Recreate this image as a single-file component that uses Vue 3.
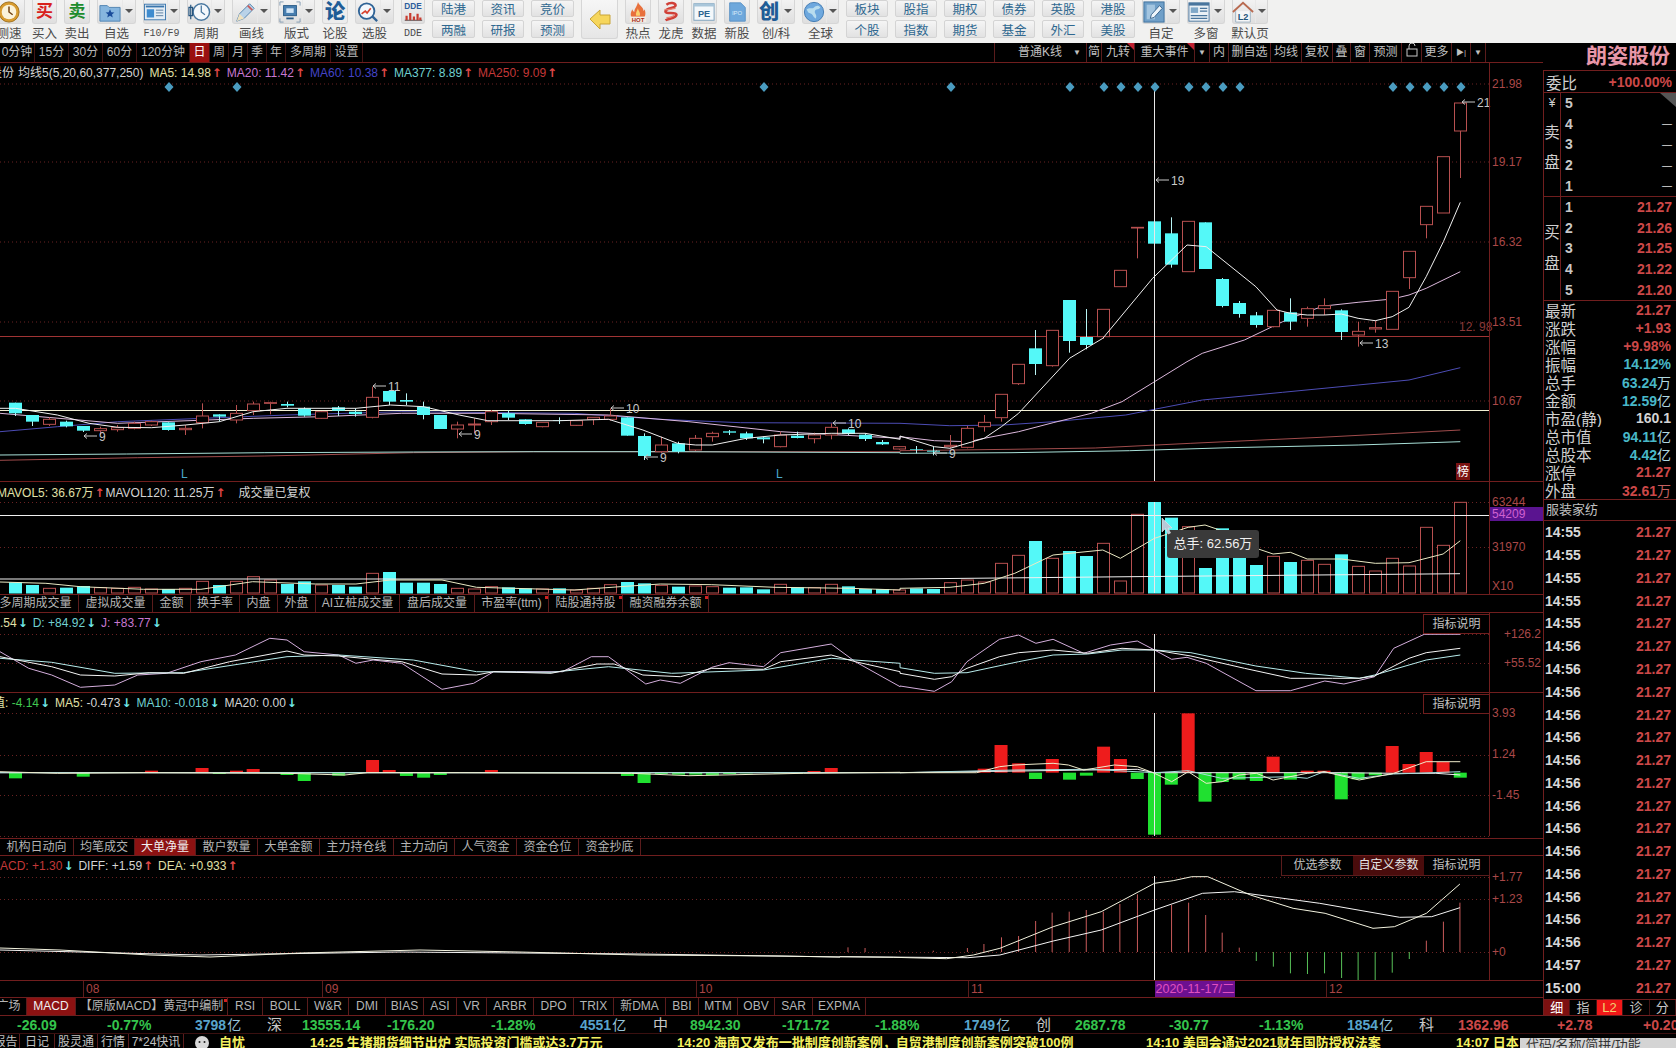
<script setup>
const txt = (s, size, color, y = 20, x = 12, weight = 900) =>
  `<text x="${x}" y="${y}" font-size="${size}" font-weight="${weight}" fill="${color}" text-anchor="middle" font-family="Liberation Sans,Noto Sans CJK SC,sans-serif">${s}</text>`

const icons = {
  clock: '<circle cx="12" cy="12" r="11" fill="#d89c30" stroke="#9c6c18"/><circle cx="12" cy="12" r="8" fill="#fbf3da"/><path d="M12 6v6l4 3" fill="none" stroke="#70400f" stroke-width="1.6"/>',
  star: '<path d="M1 5h8l2 2h12v15H1z" fill="#86b6df" stroke="#4f82b0"/><path d="M12 9l1.4 3.2 3.4.3-2.6 2.2.8 3.3-3-1.8-3 1.8.8-3.3-2.6-2.2 3.4-.3z" fill="#1a4c9a"/>',
  doc: '<rect x="0.5" y="3.5" width="23" height="17" fill="#e4edf5" stroke="#3a76ad"/><rect x="2" y="5" width="20" height="2" fill="#3a76ad"/><rect x="3" y="9" width="8" height="9" fill="#3f8ccf"/><path d="M13 10h8M13 13h8M13 16h8" stroke="#567a9c"/>',
  period: '<circle cx="14.5" cy="12" r="9" fill="#f4f8fc" stroke="#48779f" stroke-width="1.6"/><path d="M14.5 5v7l4 3" fill="none" stroke="#48779f" stroke-width="1.4"/><path d="M3 4v16M1 7h4v9H1z" fill="none" stroke="#25557f" stroke-width="1.3"/>',
  pencil: '<path d="M3 22l3-8L17 3l5 5L11 19z" fill="#b9d2e8" stroke="#4f80ac"/><path d="M15 5l5 5" stroke="#c85a5a" stroke-width="2"/><path d="M3 22l3-8 5 5z" fill="#f0e2c0"/>',
  layout: '<path d="M1 5V1h4M19 1h4v4M23 19v4h-4M5 23H1v-4" fill="none" stroke="#8099b2"/><rect x="5" y="5" width="14" height="11" fill="#477eb0" stroke="#285a86"/><rect x="8" y="8" width="8" height="5" fill="#cfe4f6"/><path d="M8 19h8" stroke="#285a86" stroke-width="2"/>',
  lun: txt('论', 22, '#1e5c96', 20),
  search: '<circle cx="10.5" cy="11" r="8.5" fill="#f3f8fd" stroke="#2f6396" stroke-width="2"/><path d="M5 14l4-3 2 2 4-5" fill="none" stroke="#d8402c" stroke-width="1.8"/><path d="M17 17l5 5" stroke="#2f6396" stroke-width="2.5"/>',
  dde: txt('DDE', 9, '#2c5c9c', 9) + '<path d="M3 21h19" stroke="#444"/><path d="M5 21v-5M9 21v-8M13 21v-4M17 21v-7M20 21v-3" stroke="#c83c30" stroke-width="2.4"/>',
  arrow: '<path d="M2 12L12 3v5h10v9H12v5z" fill="#f6d65c" stroke="#c8a438"/>',
  hot: '<path d="M12 1c1 4 6 5 6 10 1-1 1-2 1-2 2 4 1 8-1 10H6C3 16 4 12 6 9c0 2 1 2 2 3 0-4 3-6 4-11z" fill="#e8703c"/><path d="M12 8c0 3 3 4 2 8h-4c-1-3 1-5 2-8z" fill="#fbd06c"/><rect x="3" y="17" width="18" height="6" fill="#f4ece2"/>' + txt('HOT', 6.5, '#a82c20', 22.5),
  dragon: '<path d="M7 4c4-3 10-2 10 1s-10 2-11 6 12 0 12 4-9 4-12 6" fill="none" stroke="#d04038" stroke-width="2.8"/><path d="M5 9c3 2 8-1 12-1M7 18c3 0 7-1 9-3" fill="none" stroke="#e88070" stroke-width="1.2"/>',
  pe: '<rect x="1" y="3" width="22" height="18" fill="#f4f8fb" stroke="#7aa0bc"/><rect x="1" y="3" width="22" height="3" fill="#a9c6da"/>' + txt('PE', 10, '#2d6590', 17),
  ipo: '<path d="M4 2h12l5 5v15H4z" fill="#6ea8dc" stroke="#5a92c4"/>' + txt('IPO', 6.5, '#d9ecfa', 15, 12, 400),
  chuang: txt('创', 22, '#1e5c96', 20),
  globe: '<circle cx="12" cy="12" r="10.5" fill="#6ea8de" stroke="#3e78b0"/><path d="M4 9c4-2 6 0 8-2s5-3 7 0c-2 3-5 1-6 4s3 4 1 8c-3-1-3-4-5-5s-3 0-5-5z" fill="#b8dcee"/>',
  edit: '<rect x="1" y="1" width="22" height="22" fill="#6f9fc8" stroke="#3c6f9b"/><rect x="4" y="4" width="9" height="16" fill="#a3c5e0"/><path d="M8 19l1-4 9-10 3 3-9 10z" fill="#eef5fb" stroke="#335f88"/>',
  grid: '<rect x="1" y="2" width="22" height="20" fill="#eaf0f5" stroke="#49759d"/><rect x="1" y="2" width="22" height="3" fill="#49759d"/><rect x="3" y="7" width="8" height="6" fill="#7fa8c8"/><path d="M13 8h8M13 11h8M3 16h18M3 19h18" stroke="#49759d" stroke-width="1.4"/>',
  home: '<path d="M1 12L12 2l11 10" fill="none" stroke="#b86a50" stroke-width="2"/><path d="M4 11v12h16V11" fill="#f5f6f7" stroke="#9bb0c0"/>' + txt('L2', 10, '#24567c', 21)
}

const tools = [
  { w: 32, ml: -7, icon: 'clock', label: '测速' },
  { w: 25, icon: '', glyph: '买', gc: 'buy', label: '买入' },
  { w: 26, icon: '', glyph: '卖', gc: 'sell', label: '卖出' },
  { w: 39, icon: 'star', dd: 1, label: '自选' },
  { w: 37, icon: 'doc', dd: 1, label: 'F10/F9', mono: 1 },
  { w: 38, icon: 'period', dd: 1, label: '周期' },
  { w: 39, icon: 'pencil', dd: 1, label: '画线' },
  { w: 37, icon: 'layout', dd: 1, label: '版式' },
  { w: 26, icon: 'lun', label: '论股', flat: 1 },
  { w: 39, icon: 'search', dd: 1, label: '选股' },
  { w: 24, icon: 'dde', label: 'DDE', mono: 1 },
  { w: 43, pair: ['陆港', '两融'] },
  { w: 42, pair: ['资讯', '研报'] },
  { w: 43, pair: ['竞价', '预测'] },
  { w: 37, icon: 'arrow', big: 1, label: '' },
  { w: 26, icon: 'hot', label: '热点' },
  { w: 26, icon: 'dragon', label: '龙虎' },
  { w: 26, icon: 'pe', label: '数据' },
  { w: 26, icon: 'ipo', label: '新股' },
  { w: 38, icon: 'chuang', dd: 1, label: '创/科' },
  { w: 37, icon: 'globe', dd: 1, label: '全球' },
  { w: 42, pair: ['板块', '个股'] },
  { w: 42, pair: ['股指', '指数'] },
  { w: 42, pair: ['期权', '期货'] },
  { w: 42, pair: ['债券', '基金'] },
  { w: 42, pair: ['英股', '外汇'] },
  { w: 44, pair: ['港股', '美股'] },
  { w: 38, icon: 'edit', dd: 1, label: '自定' },
  { w: 38, icon: 'grid', dd: 1, label: '多窗' },
  { w: 36, icon: 'home', dd: 1, label: '默认页' }
]

const periodsL = [['0分钟', 35], ['15分', 34], ['30分', 34], ['60分', 34], ['120分钟', 53], ['日', 20], ['周', 19], ['月', 19], ['季', 19], ['年', 19], ['多周期', 45], ['设置', 32]]
const periodsR = [
  { t: '普通K线', w: 92, cls: 'pk' }, { t: '简', w: 15 }, { t: '九转', w: 33, hot: 1 }, { t: '重大事件', w: 60, hot: 1 },
  { t: '▼', w: 15, small: 1 }, { t: '内', w: 19 }, { t: '删自选', w: 42 }, { t: '均线', w: 31 }, { t: '复权', w: 31 },
  { t: '叠', w: 18 }, { t: '窗', w: 19 }, { t: '预测', w: 32 }, { t: '', w: 20, lock: 1 }, { t: '更多', w: 30 },
  { t: '▶|', w: 19, small: 1 }, { t: '▼', w: 15, small: 1 }
]

const volTabs = [['多周期成交量', 86], ['虚拟成交量', 74], ['金额', 38], ['换手率', 49], ['内盘', 38], ['外盘', 38], ['AI立桩成交量', 84], ['盘后成交量', 75], ['市盈率(ttm)', 74], ['陆股通持股', 74], ['融资融券余额', 86]]
const volDots = ['市盈率(ttm)', '陆股通持股', '融资融券余额']
const flowTabs = [['机构日动向', 74], ['均笔成交', 61], ['大单净量', 61], ['散户数量', 62], ['大单金额', 62], ['主力持仓线', 74], ['主力动向', 61], ['人气资金', 62], ['资金仓位', 62], ['资金抄底', 62]]
const macdTabs = [['广场', 36], ['MACD', 49], ['【原版MACD】黄冠中编制', 152], ['RSI', 35], ['BOLL', 45], ['W&R', 41], ['DMI', 37], ['BIAS', 38], ['ASI', 33], ['VR', 30], ['ARBR', 47], ['DPO', 40], ['TRIX', 40], ['新DMA', 52], ['BBI', 33], ['MTM', 39], ['OBV', 37], ['SAR', 38], ['EXPMA', 53]]

// ---- chart data: candles are spaced 17px, ending at x = 1460 ----
const X = i => 15 + 17 * i
const L = v => 380 + v / 3
const R = v => 190 + v / 3
// [wickTop, top, bottom, wickBottom, cyan?]
const leftC = [
  [68,68,100,108,1],[105,105,125,138,1],[112,118,133,138,0],[122,125,139,142,1],[138,138,152,156,1],[140,146,152,165,0],[135,143,149,155,0],
  [125,130,145,148,0],[122,125,135,138,0],[127,127,150,152,1],[135,145,149,165,0],[70,108,128,145,0],[103,103,110,125,1],[75,100,120,130,0],
  [65,72,92,105,0],[65,68,70,103,0],[65,72,77,82,1],[82,85,107,110,1],[93,95,115,117,0],[78,82,92,108,1],[85,95,102,110,1],[20,52,112,115,0],
  [33,33,65,75,1],[40,60,65,75,1],[65,80,105,118,1],[105,105,147,147,1],[125,135,147,175,0],[115,132,135,160,0],[90,95,125,135,0],
  [90,100,113,120,1],[118,118,132,134,1],[127,127,140,142,0],[112,121,123,132,1],[120,122,136,138,0],[112,112,118,135,0],[85,108,118,122,0],
  [112,112,167,167,1],[160,168,228,240,1],[170,195,215,220,0],[185,190,215,220,1],[165,175,210,213,0],[155,160,170,185,0],[150,154,158,165,1],
  [155,160,175,180,1],[170,172,178,190,1],[155,165,200,202,0],[155,167,174,175,1],[158,165,176,190,0],[130,142,165,178,0],[145,148,162,165,1],
  [160,164,177,183,1],[180,186,193,195,1],[198,200,207,209,0]
].map(c => [L(c[0]), L(c[1]), L(c[2]), L(c[3]), c[4]])
const rightC = [
  [768,777,779,790,1],[770,782,785,796,1],[735,766,770,775,0],[708,715,772,775,0],[675,697,710,725,0],[613,613,683,695,0],[523,523,581,585,0],
  [420,475,522,555,1],[421,421,527,530,0],[330,330,453,488,1],[357,441,465,478,1],[358,358,440,447,0],[241,241,290,290,0],[112,112,114,205,0],
  [94,94,161,161,1],[82,130,224,233,1],[94,94,245,245,0],[97,97,237,237,1],[264,267,348,352,1],[333,339,372,383,1],[366,376,405,413,1],
  [361,361,410,412,0],[325,367,395,420,1],[350,356,385,410,0],[325,347,356,375,0],[358,361,426,450,1],[395,424,435,470,0],[392,413,417,428,0],
  [304,304,418,418,0],[184,184,263,297,0],[49,49,104,145,0],[-100,-100,69,69,0],[-261,-261,-177,-36,0]
].map(c => [R(c[0]), R(c[1]), R(c[2]), R(c[3]), c[4]])
const candles = [...leftC, ...rightC].map((c, i) => ({ x: X(i), wt: c[0], t: c[1], b: c[2], wb: c[3], up: !c[4] }))

const volL = [607,615,625,623,618,623,625,622,627,627,625,604,615,604,590,600,612,604,615,615,620,580,576,608,608,612,625,627,620,622,625,627,625,630,625,614,606,610,616,620,618,620,623,622,628,613,622,623,613,619,627,627,630].map(L)
const volR = [325,327,308,300,306,250,226,183,235,213,228,190,303,103,66,113,140,264,145,190,255,229,246,241,253,223,259,273,235,258,142,196,67].map(v => 480 + v / 3)
const volBars = [...volL, ...volR].map((t, i) => ({ x: X(i), t, up: candles[i].up }))

const ptsOf = (arr, fx, fy) => arr.map(([a, b]) => `${fx(a).toFixed(1)},${fy(b).toFixed(1)}`).join(' ')
const z6x = v => v / 1.742
const z4x = v => 900 + v / 2.613
const join = (a, b, fb) => ptsOf(a, z6x, L) + ' ' + ptsOf(b, z4x, fb)

const ma5 = join(
  [[0,85],[27,85],[100,105],[155,130],[205,142],[264,143],[323,135],[382,125],[441,95],[500,85],[620,85],[680,75],[738,80],[800,105],[850,122],[975,122],[1060,118],[1120,150],[1180,190],[1212,195],[1241,195],[1300,175],[1360,165],[1448,160],[1507,160],[1568,178]],
  [[0,738],[90,770],[131,775],[220,745],[265,710],[310,670],[443,505],[530,445],[660,265],[750,165],[800,170],[930,290],[985,360],[1020,370],[1064,375],[1108,375],[1153,372],[1197,385],[1242,392],[1286,380],[1330,352],[1375,260],[1420,155],[1464,37]], R)
const ma20 = join(
  [[0,100],[205,130],[441,115],[560,110],[700,100],[850,100],[1060,105],[1200,125],[1360,155],[1568,175]],
  [[0,740],[90,752],[180,755],[220,745],[310,725],[400,698],[500,670],[580,635],[665,575],[750,515],[790,490],[900,450],[1000,395],[1064,365],[1108,348],[1197,337],[1286,327],[1330,315],[1375,295],[1464,245]], R)
const ma60 = join(
  [[0,155],[100,140],[205,125],[500,105],[700,95],[1000,100],[1150,118],[1290,128],[1568,130]],
  [[0,700],[130,707],[270,705],[400,695],[590,675],[665,658],[790,630],[1000,607],[1197,585],[1330,570],[1464,533]], R)
const ma377 = join([[0,225],[220,222],[460,218],[720,216],[930,215],[1180,215],[1568,218]], [[0,790],[290,788],[600,782],[860,773],[1197,765],[1464,755]], R)
const ma250 = join([[0,241],[240,233],[460,228],[720,218],[930,215],[1568,215]], [[0,782],[290,778],[510,774],[760,760],[1100,742],[1464,720]], R)

const diamonds = [169,237,764,951,1070,1104,1121,1138,1155,1189,1206,1223,1240,1393,1410,1427,1444,1461]
const markers = [
  { x: 1461, y: 102, t: '21' }, { x: 1155, y: 180, t: '19' }, { x: 1359, y: 343, t: '13' }, { x: 83, y: 436, t: '9' }, { x: 458, y: 434, t: '9' },
  { x: 644, y: 457, t: '9' }, { x: 933, y: 453, t: '9' }, { x: 372, y: 386, t: '11' }, { x: 610, y: 408, t: '10' }, { x: 832, y: 423, t: '10' }
]
const mainAxis = [['21.98',84],['19.17',162],['16.32',242],['13.51',322],['10.67',401]]

const volMa5 = ptsOf([[0,606],[80,610],[140,620],[250,628],[350,628],[440,605],[550,612],[620,612],[680,600],[770,600],[830,622],[1000,630],[1080,620],[1150,612],[1240,614],[1350,622],[1480,625],[1568,630]], z6x, L) + ' ' +
  ptsOf([[0,325],[131,322],[220,310],[300,280],[400,225],[530,210],[576,235],[665,175],[753,142],[797,135],[886,170],[931,205],[975,222],[1020,217],[1064,237],[1153,237],[1242,250],[1330,248],[1419,222],[1464,182]], z4x, v => 480 + v / 3)

const z9y = v => 610 + v / 3
const z5y = v => 480 + v / 3
const join95 = (a, b) => ptsOf(a, z6x, z9y) + ' ' + ptsOf(b, z4x, z5y)
const kdjJ = join95(
  [[0,125],[50,175],[90,195],[140,232],[200,225],[240,195],[290,190],[350,155],[410,135],[470,85],[500,90],[530,125],[590,135],[620,160],[650,150],[700,160],[770,238],[825,220],[860,185],[900,185],[980,185],[1030,140],[1060,140],[1125,222],[1150,210],[1185,220],[1240,172],[1270,158],[1330,170],[1360,128],[1448,102],[1490,155],[1568,230]],
  [[0,618],[90,634],[135,605],[175,545],[260,478],[310,465],[355,490],[400,478],[480,520],[550,495],[620,483],[665,510],[710,538],[750,532],[800,550],[930,632],[1020,632],[1110,603],[1160,612],[1240,590],[1290,505],[1370,463],[1464,463]])
const kdjK = join95(
  [[0,140],[30,150],[90,170],[140,195],[200,198],[260,188],[320,190],[400,155],[500,123],[530,135],[590,138],[650,148],[700,155],[770,192],[830,195],[860,185],[960,190],[1040,162],[1070,162],[1120,195],[1185,200],[1240,175],[1330,178],[1360,155],[1448,135],[1490,155],[1568,185]],
  [[0,580],[90,598],[135,590],[175,565],[260,530],[310,518],[400,510],[490,520],[580,505],[665,510],[760,528],[900,565],[1020,595],[1130,595],[1200,595],[1240,588],[1330,535],[1375,518],[1464,505]])
const kdjD = join95(
  [[0,145],[90,157],[200,190],[320,188],[500,140],[590,135],[720,150],[830,185],[960,187],[1060,170],[1170,190],[1330,180],[1448,145],[1568,160]],
  [[0,563],[90,580],[175,578],[310,545],[400,525],[490,522],[580,510],[665,510],[760,518],[930,558],[1060,580],[1200,595],[1240,585],[1375,540],[1464,525]])

const base = z5y(878)
const hist = [
  ...[[27,505,0],[145,500,0],[264,482,1],[352,474,1],[382,492,0],[412,482,1],[441,477,1],[500,495,0],[530,513,0],[590,497,0],[620,490,0],[649,450,1],[678,480,1],[708,498,0],[738,503,0],[767,495,0],[856,480,1],[1093,498,0],[1122,519,0],[1152,492,0],[1182,494,0],[1212,494,0],[1241,496,0],[1271,492,0],[1300,490,0],[1330,488,1],[1359,490,0],[1389,490,0],[1418,483,1],[1448,474,1]]
    .map(h => ({ x: z6x(h[0]), y: z9y(h[1]), r: h[2] })),
  ...[[220,866,1],[264,795,1],[310,850,1],[354,897,0],[398,837,1],[443,899,0],[487,887,0],[532,800,1],[576,837,1],[620,897,0],[665,1064,0],[709,914,0],[753,700,1],[797,965,0],[842,906,0],[886,899,0],[931,903,0],[975,830,1],[1020,899,0],[1064,872,1],[1108,872,1],[1153,958,0],[1197,898,0],[1242,886,0],[1286,798,1],[1330,852,1],[1375,816,1],[1419,846,1],[1464,893,0]]
    .map(h => ({ x: z4x(h[0]), y: z5y(h[1]), r: h[2] }))
].map(h => ({ x: h.x - 6.5, y: Math.min(h.y, base), h: Math.abs(h.y - base), r: h.r }))
const histW = ptsOf([[0,485],[100,490],[250,488],[500,490],[600,495],[640,488],[800,488],[1100,490],[1200,497],[1400,490],[1568,487]], z6x, z9y) + ' ' +
  ptsOf([[0,878],[200,878],[260,860],[300,855],[400,850],[440,855],[480,870],[560,855],[620,860],[665,880],[710,905],[753,875],[800,910],[842,905],[886,885],[931,880],[975,900],[1064,880],[1108,875],[1200,900],[1290,880],[1375,845],[1464,845]], z4x, z5y)
const histC = ptsOf([[0,488],[1568,488]], z6x, z9y) + ' ' +
  ptsOf([[0,878],[300,870],[500,868],[665,878],[753,872],[840,895],[1020,890],[1064,895],[1108,875],[1200,895],[1290,882],[1464,875]], z4x, z5y)
const histF = ptsOf([[0,488],[1568,488]], z6x, z9y) + ' ' + ptsOf([[0,878],[620,868],[665,878],[1153,878],[1290,880],[1400,880],[1464,885]], z4x, z5y)

const z8x = v => 840 + v / 1.876
const z8y = v => 860 + v / 3
const leftD = '0,948 60,950 150,955 210,957 300,953 420,950 520,952 640,955 780,956 840,957'
const leftE = '0,950 200,955 400,952 640,954 840,957'
const macdDiff = leftD + ' ' + ptsOf([[0,290],[100,292],[200,296],[250,285],[300,265],[400,200],[490,155],[590,70],[625,62],[660,50],[690,50],[770,105],[850,145],[910,160],[1000,205],[1040,200],[1100,160],[1163,72]], z8x, z8y)
const macdDea = leftE + ' ' + ptsOf([[0,290],[240,293],[300,285],[400,243],[490,210],[590,150],[680,100],[740,95],[900,130],[1050,172],[1110,170],[1163,143]], z8x, z8y)
const macdSticks = [[15,262],[47,264],[112,272],[175,272],[239,264],[270,252],[303,232],[335,228],[367,183],[398,158],[430,155],[462,150],[494,155],[525,132],[558,103],[590,110],[622,135],[654,128],[686,165],[717,218],[749,263],[781,303],[813,320],[845,340],[877,342],[909,340],[941,354],[972,360],[1004,360],[1036,338],[1068,297],[1100,242],[1132,185],[1163,128]]
  .map(([v, t]) => ({ x: z8x(v), y: z8y(t), c: v === 590 ? '#58b0c0' : t > 275 ? '#58c058' : '#c85a5a' }))

const xLabels = [{ t: '08', x: 83, w: 239 }, { t: '09', x: 322, w: 374 }, { t: '10', x: 696, w: 272 }, { t: '11', x: 968, w: 187 }]

// ---- side panel ----
const stats = [
  ['最新','21.27','r'],['涨跌','+1.93','r'],['涨幅','+9.98%','r'],['振幅','14.12%','c'],['总手','63.24','c','万'],['金额','12.59','c','亿'],
  ['市盈(静)','160.1','w'],['总市值','94.11','c','亿'],['总股本','4.42','c','亿'],['涨停','21.27','r'],['外盘','32.61','r','万']
]
const buys = [['1','21.27'],['2','21.26'],['3','21.25'],['4','21.22'],['5','21.20']]
const times = [...Array(5).fill('14:55'), ...Array(14).fill('14:56'), '14:57', '15:00']
const sideTabs = ['细', '指', 'L2', '诊', '分']

const quotes = [
  ['-26.09',17,'g'],['-0.77%',107,'g'],['3798',195,'b','亿'],['深',267,'cn'],['13555.14',302,'g'],['-176.20',387,'g'],['-1.28%',491,'g'],['4551',580,'b','亿'],
  ['中',653,'cn'],['8942.30',690,'g'],['-171.72',782,'g'],['-1.88%',875,'g'],['1749',964,'b','亿'],['创',1036,'cn'],['2687.78',1075,'g'],['-30.77',1169,'g'],['-1.13%',1259,'g'],
  ['1854',1347,'b','亿'],['科',1419,'cn'],['1362.96',1458,'r'],['+2.78',1557,'r'],['+0.20',1643,'r']
].map((q, i, a) => ({ t: q[0], w: (a[i + 1] ? a[i + 1][1] : 1690) - q[1], c: q[2], s: q[3] }))

const newsTabs = [['报告', 20], ['日记', 35], ['股灵通', 43], ['行情', 31], ['7*24快讯', 55]]
const news = [
  ['14:25 生猪期货细节出炉 实际投资门槛或达3.7万元', 367],
  ['14:20 海南又发布一批制度创新案例，自贸港制度创新案例突破100例', 469],
  ['14:10 美国会通过2021财年国防授权法案', 310],
  ['14:07 日本', 64]
]
</script>

<template>
  <div class="screen">
    <header class="toolbar">
      <template v-for="(it, i) in tools" :key="i">
        <div v-if="it.pair" class="pair" :style="{ width: it.w + 'px' }">
          <span v-for="p in it.pair" :key="p" class="pair-btn">{{ p }}</span>
        </div>
        <div v-else class="tool" :style="{ width: it.w + 'px', marginLeft: (it.ml || 0) + 'px' }">
          <div class="tool-btn" :class="{ big: it.big, flat: it.flat }">
            <span v-if="it.glyph" class="glyph" :class="it.gc">{{ it.glyph }}</span>
            <svg v-else class="ico" :class="{ 'ico-big': it.big }" viewBox="0 0 24 24" v-html="icons[it.icon]"></svg>
            <span v-if="it.dd" class="dd"></span>
          </div>
          <span v-if="it.label" class="tool-label" :class="{ mono: it.mono }">{{ it.label }}</span>
        </div>
      </template>
    </header>

    <div class="body">
      <main class="chart-col">
        <nav class="period">
          <span v-for="p in periodsL" :key="p[0]" class="p-item" :class="{ on: p[0] === '日' }" :style="{ width: p[1] + 'px' }">{{ p[0] }}</span>
          <span class="p-spacer"></span>
          <span v-for="(p, i) in periodsR" :key="i" class="p-r" :class="{ hot: p.hot, pk: p.cls, small: p.small }" :style="{ width: p.w + 'px' }">
            <svg v-if="p.lock" width="12" height="14" viewBox="0 0 12 14"><rect x="1" y="6" width="10" height="7" fill="none" stroke="#c8c8c8"/><path d="M3 6V3a3 3 0 0 1 6 0" fill="none" stroke="#c8c8c8"/></svg>
            <template v-else>{{ p.t }}</template>
            <i v-if="p.cls" class="pk-arrow">▼</i>
          </span>
        </nav>

        <section class="pane h-main">
          <svg class="chart" viewBox="0 63 1543 418" preserveAspectRatio="xMinYMin">
            <line v-for="a in mainAxis" :key="a[0]" x1="0" x2="1489" :y1="a[1]" :y2="a[1]" class="grid" />
            <line x1="0" x2="1489" y1="336.5" y2="336.5" stroke="#a03434" />
            <line x1="0" x2="1489" y1="410.5" y2="410.5" stroke="#f2f0d4" />
            <polyline :points="ma250" class="ln" stroke="#a04c4c" />
            <polyline :points="ma377" class="ln" stroke="#a8e0d8" />
            <polyline :points="ma60" class="ln" stroke="#4c4cb4" />
            <polyline :points="ma20" class="ln" stroke="#dcb8dc" />
            <g v-for="c in candles" :key="c.x">
              <template v-if="c.up">
                <line :x1="c.x + 0.5" :x2="c.x + 0.5" :y1="c.wt" :y2="c.t" stroke="#b85050" />
                <line :x1="c.x + 0.5" :x2="c.x + 0.5" :y1="c.b" :y2="c.wb" stroke="#b85050" />
                <rect :x="c.x - 5.5" :y="c.t" width="12" :height="c.b - c.t" fill="#000" stroke="#b85050" />
              </template>
              <template v-else>
                <line :x1="c.x + 0.5" :x2="c.x + 0.5" :y1="c.wt" :y2="c.wb" stroke="#b8f4f4" />
                <rect :x="c.x - 6" :y="c.t" width="13" :height="c.b - c.t" fill="#54f8f8" />
              </template>
            </g>
            <polyline :points="ma5" class="ln" stroke="#f0f0f0" />
            <line x1="1154.5" x2="1154.5" y1="87" y2="481" stroke="#e8e8e8" />
            <path v-for="d in diamonds" :key="d" :d="`M${d} 82l4.5 5-4.5 5-4.5-5z`" fill="#4a9cc0" />
            <g v-for="m in markers" :key="m.x + m.t">
              <path :d="`M${m.x + 1} ${m.y}h13M${m.x + 4} ${m.y - 2.5}l-3 2.5 3 2.5`" fill="none" stroke="#c8c8c8" />
              <text :x="m.x + 16" :y="m.y + 4.5" class="mk">{{ m.t }}</text>
            </g>
            <text x="181" y="478" class="mk blue">L</text>
            <text x="776" y="478" class="mk blue">L</text>
            <text v-for="a in mainAxis" :key="a[0] + 'l'" x="1492" :y="a[1] + 4" class="ax">{{ a[0] }}</text>
            <text x="1459" y="331" class="ax dim">12. 98</text>
            <rect x="1456" y="463" width="14" height="17" fill="#7a1212" />
            <text x="1457" y="476" class="badge">榜</text>
            <line x1="1489.5" x2="1489.5" y1="63" y2="481" class="axl" />
          </svg>
          <div class="title t-main">
            <span class="w">股份</span><span class="w ml">均线5(5,20,60,377,250)</span>
            <span class="y ml2">MA5: 14.98</span><b class="up">↑</b>
            <span class="pu ml2">MA20: 11.42</span><b class="up">↑</b>
            <span class="bl ml2">MA60: 10.38</span><b class="up">↑</b>
            <span class="te ml2">MA377: 8.89</span><b class="up">↑</b>
            <span class="re ml2">MA250: 9.09</span><b class="up">↑</b>
          </div>
        </section>

        <section class="pane h-vol">
          <svg class="chart" viewBox="0 482 1543 112" preserveAspectRatio="xMinYMin">
            <line x1="0" x2="1489" y1="502.5" y2="502.5" class="grid" />
            <line x1="0" x2="1489" y1="547.5" y2="547.5" class="grid" />
            <g v-for="b in volBars" :key="b.x">
              <rect v-if="b.up" :x="b.x - 5.5" :y="b.t" width="12" :height="593 - b.t" fill="#000" stroke="#b85050" />
              <rect v-else :x="b.x - 6" :y="b.t" width="13" :height="593.5 - b.t" fill="#54f8f8" />
            </g>
            <line x1="0" x2="1489" y1="515.5" y2="515.5" stroke="#f0f0f0" />
            <polyline points="0,579 900,579 1130,576.7 1460,573.7" class="ln" stroke="#f0f0f0" />
            <polyline :points="volMa5" class="ln" stroke="#eaeac4" />
            <line x1="1154.5" x2="1154.5" y1="502" y2="593" stroke="#e8e8e8" />
            <rect x="1489" y="507" width="54" height="14" fill="#5a1490" />
            <text x="1492" y="506" class="ax">63244</text>
            <text x="1492" y="518" class="ax pk2">54209</text>
            <text x="1492" y="551" class="ax">31970</text>
            <text x="1492" y="590" class="ax">X10</text>
            <line x1="1489.5" x2="1489.5" y1="482" y2="594" class="axl" />
          </svg>
          <div class="title t-vol">
            <span class="y">MAVOL5: 36.67万</span><b class="up">↑</b>
            <span class="w ml1">MAVOL120: 11.25万</span><b class="up">↑</b>
            <span class="w ml3">成交量已复权</span>
          </div>
          <div class="tooltip">总手: 62.56万</div>
          <svg class="cursor" width="12" height="18" viewBox="0 0 12 18"><path d="M1 1v14l3.5-3.5L7 17l2.5-1-2.5-5H11z" fill="#b8c8d8" stroke="#e8e8e8" stroke-width=".6"/></svg>
        </section>

        <nav class="tabs v-tabs">
          <span v-for="t in volTabs" :key="t[0]" class="tab" :class="{ dot: volDots.includes(t[0]) }" :style="{ width: t[1] + 'px' }">{{ t[0] }}</span>
        </nav>

        <section class="pane h-kdj">
          <svg class="chart" viewBox="0 613 1543 79" preserveAspectRatio="xMinYMin">
            <line x1="0" x2="1489" y1="634.5" y2="634.5" class="grid" />
            <line x1="0" x2="1489" y1="663.5" y2="663.5" class="grid" />
            <polyline :points="kdjJ" class="ln" stroke="#d4aedc" />
            <polyline :points="kdjD" class="ln" stroke="#b8ecec" />
            <polyline :points="kdjK" class="ln" stroke="#f4f4f4" />
            <line x1="1154.5" x2="1154.5" y1="634" y2="692" stroke="#e8e8e8" />
            <text x="1504" y="638" class="ax">+126.2</text>
            <text x="1504" y="667" class="ax">+55.52</text>
            <line x1="1489.5" x2="1489.5" y1="613" y2="692" class="axl" />
          </svg>
          <div class="title t-kdj">
            <span class="y">.54</span><b class="dn">↓</b>
            <span class="te ml2">D: +84.92</span><b class="dn">↓</b>
            <span class="pu ml2">J: +83.77</span><b class="dn">↓</b>
          </div>
          <span class="help k-help">指标说明</span>
        </section>

        <section class="pane h-flow">
          <svg class="chart" viewBox="0 693 1543 145" preserveAspectRatio="xMinYMin">
            <line v-for="y in [713.5, 755.5, 795.5, 836.5]" :key="y" x1="0" x2="1489" :y1="y" :y2="y" class="grid" />
            <rect v-for="(h, i) in hist" :key="i" :x="h.x" :y="h.y" width="13" :height="h.h" :fill="h.r ? '#ee1c1c' : '#20e030'" />
            <polyline :points="histF" class="ln" stroke="#f4f4f4" />
            <polyline :points="histC" class="ln" stroke="#a8dcdc" />
            <polyline :points="histW" class="ln" stroke="#f0eccc" />
            <line x1="1154.5" x2="1154.5" y1="713" y2="836" stroke="#e8e8e8" />
            <text x="1492" y="717" class="ax">3.93</text>
            <text x="1492" y="758" class="ax">1.24</text>
            <text x="1492" y="799" class="ax">-1.45</text>
            <line x1="1489.5" x2="1489.5" y1="693" y2="836" class="axl" />
          </svg>
          <div class="title t-flow">
            <span class="y">值:</span><span class="gr"> -4.14</span><b class="dn">↓</b>
            <span class="y ml2">MA5:</span><span class="w"> -0.473</span><b class="dn">↓</b>
            <span class="te ml2">MA10: -0.018</span><b class="dn">↓</b>
            <span class="w ml2">MA20: 0.00</span><b class="dn">↓</b>
          </div>
          <span class="help k-help">指标说明</span>
        </section>

        <nav class="tabs f-tabs">
          <span v-for="t in flowTabs" :key="t[0]" class="tab" :class="{ sel: t[0] === '大单净量' }" :style="{ width: t[1] + 'px' }">{{ t[0] }}</span>
        </nav>

        <section class="pane h-macd">
          <svg class="chart" viewBox="0 856 1543 124" preserveAspectRatio="xMinYMin">
            <line v-for="y in [877.5, 899.5, 952.5]" :key="y" x1="0" x2="1489" :y1="y" :y2="y" class="grid" />
            <line v-for="s in macdSticks" :key="s.x" :x1="s.x" :x2="s.x" :y1="s.y" y2="952" :stroke="s.c" />
            <polyline :points="macdDea" class="ln" stroke="#f4f4f4" />
            <polyline :points="macdDiff" class="ln" stroke="#f4f4e0" />
            <line x1="1154.5" x2="1154.5" y1="876" y2="980" stroke="#f0f0f0" />
            <text x="1492" y="881" class="ax">+1.77</text>
            <text x="1492" y="903" class="ax">+1.23</text>
            <text x="1492" y="956" class="ax">+0</text>
            <line x1="1489.5" x2="1489.5" y1="856" y2="980" class="axl" />
          </svg>
          <div class="title t-kdj">
            <span class="re">ACD: +1.30</span><b class="dn">↓</b>
            <span class="w ml2">DIFF: +1.59</span><b class="up">↑</b>
            <span class="y ml2">DEA: +0.933</span><b class="up">↑</b>
          </div>
          <div class="help-row">
            <span class="hr-item">优选参数</span><span class="hr-item on">自定义参数</span><span class="hr-item">指标说明</span>
          </div>
        </section>

        <div class="xaxis">
          <span v-for="x in xLabels" :key="x.t" class="xl" :style="{ width: x.w + 'px' }">{{ x.t }}</span>
          <span class="date">2020-11-17/二</span>
          <span class="xl twelve">12</span>
        </div>

        <nav class="tabs m-tabs">
          <span v-for="t in macdTabs" :key="t[0]" class="tab" :class="{ sel: t[0] === 'MACD', dot: t[0].includes('原版') }" :style="{ width: t[1] + 'px' }">{{ t[0] }}</span>
        </nav>
      </main>

      <aside class="side">
        <div class="s-name">朗姿股份</div>
        <div class="s-ratio"><span class="lab">委比</span><b class="r">+100.00%</b></div>
        <div class="s-book">
          <div class="book-head"><span class="yen">¥</span><span class="lab">卖</span><span class="lab">盘</span></div>
          <div class="book-rows">
            <div v-for="n in [5, 4, 3, 2, 1]" :key="n" class="b-row"><b>{{ n }}</b><span v-if="n !== 5" class="b-dash">—</span></div>
          </div>
          <i class="corner"></i>
        </div>
        <div class="s-book">
          <div class="book-head mid"><span class="lab">买</span><span class="lab">盘</span></div>
          <div class="book-rows">
            <div v-for="b in buys" :key="b[0]" class="b-row"><b>{{ b[0] }}</b><b class="r">{{ b[1] }}</b></div>
          </div>
        </div>
        <div class="s-stats">
          <div v-for="s in stats" :key="s[0]" class="st-row">
            <span class="lab">{{ s[0] }}</span>
            <span><b :class="s[2]">{{ s[1] }}</b><span v-if="s[3]" :class="'thin-' + s[2]">{{ s[3] }}</span></span>
          </div>
        </div>
        <div class="s-ind">服装家纺</div>
        <div class="s-ticks">
          <div v-for="(t, i) in times" :key="i" class="tick"><b>{{ t }}</b><b class="r">21.27</b></div>
        </div>
        <nav class="s-tabs">
          <span v-for="t in sideTabs" :key="t" class="s-tab" :class="{ sel: t === '细', l2: t === 'L2' }">{{ t }}</span>
        </nav>
      </aside>
    </div>

    <div class="status">
      <span v-for="q in quotes" :key="q.t" class="q" :style="{ width: q.w + 'px' }" :class="q.c">{{ q.t }}<i v-if="q.s" class="q-s">{{ q.s }}</i></span>
    </div>

    <footer class="newsbar">
      <span v-for="n in newsTabs" :key="n[0]" class="n-tab" :style="{ width: n[1] + 'px' }">{{ n[0] }}</span>
      <svg class="bot" width="20" height="15" viewBox="0 0 20 15"><circle cx="10" cy="9" r="7" fill="#d8d8d8"/><circle cx="7.5" cy="8" r="1" fill="#222"/><circle cx="12.5" cy="8" r="1" fill="#222"/></svg>
      <b class="n-self">自忧</b>
      <span v-for="n in news" :key="n[0]" class="n-item" :style="{ width: n[1] + 'px' }">{{ n[0] }}</span>
      <span class="search">代码/名称/简拼/功能</span>
    </footer>
  </div>
</template>

<style scoped>
.screen {
  width: 1676px;
  height: 1048px;
  overflow: hidden;
  background: #000;
  font-family: "Liberation Sans", "Noto Sans CJK SC", sans-serif;
  font-size: 12px;
  color: #bbb;
}
.toolbar {
  height: 43px;
  display: flex;
  gap: 7px;
  background: #f1f1f0;
  overflow: hidden;
}
.tool { flex: none; display: flex; flex-direction: column; align-items: center; }
.tool-btn {
  width: 100%;
  height: 24px;
  flex: none;
  display: flex;
  align-items: center;
  justify-content: center;
  position: relative;
  background: linear-gradient(#f2f2f2, #dfdfdf);
  border: 1px solid #d6d6d6;
  border-top: 0;
  border-radius: 0 0 3px 3px;
  box-sizing: border-box;
}
.tool-btn.flat { background: #ececec; }
.tool-btn.big { height: 39px; background: linear-gradient(#f6f6f6, #e6e6e6); }
.ico { width: 22px; height: 22px; flex: none; overflow: visible; }
.ico-big { width: 24px; height: 24px; }
.glyph { font-size: 17px; font-weight: 700; line-height: 22px; }
.buy { color: #d8201c; }
.sell { color: #1c8c2c; }
.dd {
  width: 12px;
  height: 100%;
  flex: none;
  border-left: 1px solid #e8e8e8;
  position: relative;
  margin-left: 1px;
}
.dd::after {
  content: "";
  position: absolute;
  left: 2px;
  top: 9px;
  border: 4px solid transparent;
  border-top: 4px solid #555;
}
.tool-label {
  margin-top: 2px;
  font-size: 12.5px;
  line-height: 16px;
  color: #4c4c4c;
  white-space: nowrap;
}
.tool-label.mono { font-family: "Liberation Mono", monospace; font-size: 10px; }
.pair { flex: none; display: flex; flex-direction: column; gap: 3px; }
.pair-btn {
  height: 17px;
  display: flex;
  align-items: center;
  justify-content: center;
  font-size: 12.5px;
  color: #2f6890;
  background: linear-gradient(#f5f5f5, #e2e2e2);
  border: 1px solid #d4d4d4;
  border-radius: 2px;
  box-sizing: border-box;
}
.pair-btn:last-child { height: 18px; }

.body { display: flex; height: 973px; }
.chart-col { width: 1543px; flex: none; }
.period {
  height: 20px;
  box-sizing: border-box;
  display: flex;
  border-bottom: 1px solid #701e1e;
  white-space: nowrap;
}
.p-item {
  flex: none;
  box-sizing: border-box;
  text-align: center;
  line-height: 19px;
  border-right: 1px solid #421414;
  color: #b8b8b8;
}
.p-item.on { background: #9a1010; color: #fff; }
.p-spacer { flex: 0 0 632px; box-sizing: border-box; border-right: 1px solid #5a1c1c; }
.p-r {
  flex: none;
  box-sizing: border-box;
  text-align: center;
  line-height: 19px;
  border-right: 1px solid #5a1c1c;
  color: #c0c0c0;
  position: relative;
  overflow: hidden;
}
.p-r.small { font-size: 8px; }
.p-r.pk { text-align: left; padding-left: 23px; }
.pk-arrow { position: absolute; left: 78px; top: 0; font-style: normal; font-size: 8px; }
.p-r.hot::after {
  content: "";
  position: absolute;
  right: 0;
  top: 0;
  border-top: 7px solid #c02030;
  border-left: 7px solid transparent;
}
.pane { position: relative; box-sizing: border-box; border-bottom: 1px solid #701e1e; overflow: hidden; }
.h-main { height: 419px; }
.h-vol { height: 113px; }
.h-kdj { height: 80px; }
.h-flow { height: 146px; }
.h-macd { height: 125px; }
.chart { display: block; width: 1543px; height: 100%; font-family: "Liberation Sans", "Noto Sans CJK SC", sans-serif; }
.grid { stroke: #6a2222; stroke-dasharray: 1 3; }
.ln { fill: none; stroke-linejoin: round; }
.axl { stroke: #701e1e; }
.ax { font-size: 12px; fill: #aa4848; }
.ax.dim { fill: #8c3a3a; }
.ax.pk2 { fill: #d060d0; }
.mk { font-size: 12px; fill: #c8c8c8; }
.mk.blue { fill: #4aa8cc; font-size: 12px; }
.badge { font-size: 12px; fill: #fff; }
.title {
  position: absolute;
  left: 0;
  white-space: nowrap;
  line-height: 16px;
  font-size: 12px;
}
.title b {
  display: inline-block;
  width: 9px;
  margin-left: 1px;
  text-align: center;
  font-family: "DejaVu Sans", sans-serif;
  font-weight: 700;
}
.t-main { top: 2px; left: -10px; }
.t-vol { top: 3px; left: -3px; }
.t-kdj { top: 2px; left: 0; }
.t-flow { top: 2px; left: -7px; }
.w { color: #d4d4d4; }
.y { color: #e0e0a8; }
.pu { color: #c878d0; }
.bl { color: #4444c8; }
.te { color: #70d0d0; }
.re { color: #c43838; }
.gr { color: #40c850; }
.up { color: #e04848; }
.dn { color: #70e8e8; }
.ml { margin-left: 4px; }
.ml1 { margin-left: 2px; }
.ml2 { margin-left: 6px; }
.ml3 { margin-left: 14px; }
.tooltip {
  position: absolute;
  left: 1167px;
  top: 48px;
  width: 92px;
  height: 28px;
  line-height: 28px;
  text-align: center;
  background: #3a3a3a;
  border-radius: 3px;
  color: #f0f0f0;
  font-size: 13px;
}
.cursor { position: absolute; left: 1161px; top: 35px; }
.help {
  position: absolute;
  border: 1px solid #701e1e;
  color: #c0c0c0;
  line-height: 18px;
  box-sizing: border-box;
  width: 67px;
  text-align: center;
}
.k-help { right: 53px; top: 1px; height: 20px; }
.help-row { position: absolute; right: 53px; top: 0; display: flex; border: 1px solid #5a1c1c; border-top: 0; height: 19px; }
.hr-item { width: 71px; text-align: center; line-height: 18px; color: #c0c0c0; }
.hr-item:last-child { width: 65px; }
.hr-item.on { background: #4a0c0c; color: #e4e4e4; }
.tabs {
  display: flex;
  height: 18px;
  box-sizing: border-box;
  border-bottom: 1px solid #701e1e;
  white-space: nowrap;
}
.f-tabs { height: 17px; }
.tab {
  box-sizing: border-box;
  text-align: center;
  line-height: 17px;
  border-right: 1px solid #5a1c1c;
  color: #b4b4b4;
  position: relative;
  flex: none;
}
.v-tabs .tab:first-child { margin-left: -7px; }
.m-tabs .tab:first-child { margin-left: -9px; }
.tab.sel { background: #8c1212; color: #f0f0f0; }
.tab.dot::after {
  content: "";
  position: absolute;
  right: 0;
  top: 1px;
  width: 3px;
  height: 3px;
  background: #d02020;
}
.xaxis { display: flex; height: 17px; box-sizing: border-box; border-bottom: 1px solid #701e1e; padding-left: 83px; }
.xl {
  flex: none;
  box-sizing: border-box;
  color: #aa4444;
  line-height: 16px;
  padding-left: 2px;
  border-left: 1px solid #5a1c1c;
  font-size: 12px;
}
.date {
  flex: none;
  width: 80px;
  height: 16px;
  background: #6c1090;
  color: #e050c0;
  line-height: 16px;
  font-size: 12.5px;
  text-align: center;
}
.xl.twelve { margin-left: 91px; }

.side { width: 133px; flex: none; box-sizing: border-box; display: flex; flex-direction: column; }
.s-name {
  height: 27px;
  flex: none;
  text-align: right;
  padding-right: 6px;
  font-size: 21px;
  line-height: 25px;
  color: #e896a8;
  font-weight: 700;
}
.lab { font-size: 15.5px; color: #cfcfcf; white-space: nowrap; }
.r { color: #cc4848; }
.c { color: #48b8c8; }
.g { color: #34c44c; }
.b { color: #58a4cc; }
.thin-c { color: #b0d8e0; font-size: 14px; }
.thin-r { color: #c46060; font-size: 14px; }
.s-ratio {
  height: 23px;
  flex: none;
  box-sizing: border-box;
  display: flex;
  align-items: center;
  justify-content: space-between;
  padding: 0 4px 0 2px;
  border: 1px solid #701e1e;
  border-right: 0;
  font-size: 14px;
}
.s-book {
  height: 104px;
  flex: none;
  box-sizing: border-box;
  display: flex;
  border-left: 1px solid #701e1e;
  border-bottom: 1px solid #701e1e;
  position: relative;
}
.book-head {
  width: 17px;
  flex: none;
  box-sizing: border-box;
  border-right: 1px solid #701e1e;
  display: flex;
  flex-direction: column;
  align-items: center;
  justify-content: space-between;
  padding: 2px 0 24px;
  overflow: hidden;
}
.book-head.mid { justify-content: center; gap: 13px; padding: 0; }
.yen { color: #cfcfcf; line-height: 16px; }
.book-head .lab { line-height: 18px; }
.book-rows { flex: 1; display: flex; flex-direction: column; }
.b-row {
  flex: 1;
  display: flex;
  justify-content: space-between;
  align-items: center;
  padding: 0 4px 0 4px;
  font-size: 14px;
  color: #c8c8c8;
}
.b-dash { color: #ddd; font-size: 10px; }
.corner {
  position: absolute;
  right: 0;
  top: 0;
  border-top: 14px solid #555;
  border-left: 16px solid transparent;
}
.s-stats { flex: none; height: 198px; border-left: 1px solid #701e1e; box-sizing: border-box; }
.st-row {
  height: 18px;
  display: flex;
  justify-content: space-between;
  align-items: center;
  padding: 0 5px 0 1px;
  font-size: 14px;
  overflow: hidden;
}
.s-ind {
  flex: none;
  height: 22px;
  box-sizing: border-box;
  line-height: 20px;
  font-size: 13px;
  padding-left: 2px;
  color: #c0c0c0;
  border: 1px solid #701e1e;
  border-right: 0;
}
.s-ticks { flex: 1; display: flex; flex-direction: column; border-left: 1px solid #701e1e; min-height: 0; }
.tick {
  flex: 1;
  display: flex;
  justify-content: space-between;
  align-items: center;
  padding: 0 5px 0 1px;
  font-size: 14px;
  color: #d8d8d8;
}
.s-tabs { flex: none; height: 17px; display: flex; border: 1px solid #701e1e; border-right: 0; box-sizing: border-box; }
.s-tab { flex: 1; text-align: center; line-height: 15px; color: #c8c8c8; border-right: 1px solid #421414; font-size: 13px; }
.s-tab.sel { background: #7c1010; color: #fff; }
.s-tab.l2 { background: #f01818; color: #f0d070; }

.status {
  display: flex;
  height: 17px;
  padding-left: 17px;
  overflow: hidden;
  white-space: nowrap;
}
.q { flex: none; font-size: 14px; font-weight: 700; line-height: 18px; }
.q.cn { color: #c8c8c8; font-weight: 400; font-size: 15px; }
.q-s { font-style: normal; font-weight: 400; color: #98c4d8; margin-left: 1px; }
.newsbar {
  display: flex;
  height: 15px;
  overflow: hidden;
  white-space: nowrap;
  border-top: 1px solid #3a1010;
  box-sizing: border-box;
  position: relative;
}
.n-tab {
  flex: none;
  box-sizing: border-box;
  text-align: center;
  line-height: 17px;
  color: #c0c0c0;
  border-right: 1px solid #5a1c1c;
}
.n-tab:first-child { text-indent: -8px; }
.bot { flex: none; margin: 0 7px 0 8px; }
.n-self { flex: none; color: #f4f060; font-size: 13px; line-height: 17px; width: 91px; }
.n-item { flex: none; color: #f4f060; font-size: 13px; font-weight: 700; line-height: 17px; }
.search {
  position: absolute;
  left: 1520px;
  top: 4px;
  width: 156px;
  height: 14px;
  padding-left: 6px;
  box-sizing: border-box;
  background: #d4d4d4;
  color: #333;
  font-size: 13px;
  line-height: 14px;
}
</style>

<style>
html, body { margin: 0; background: #000; overflow: hidden; }
</style>
